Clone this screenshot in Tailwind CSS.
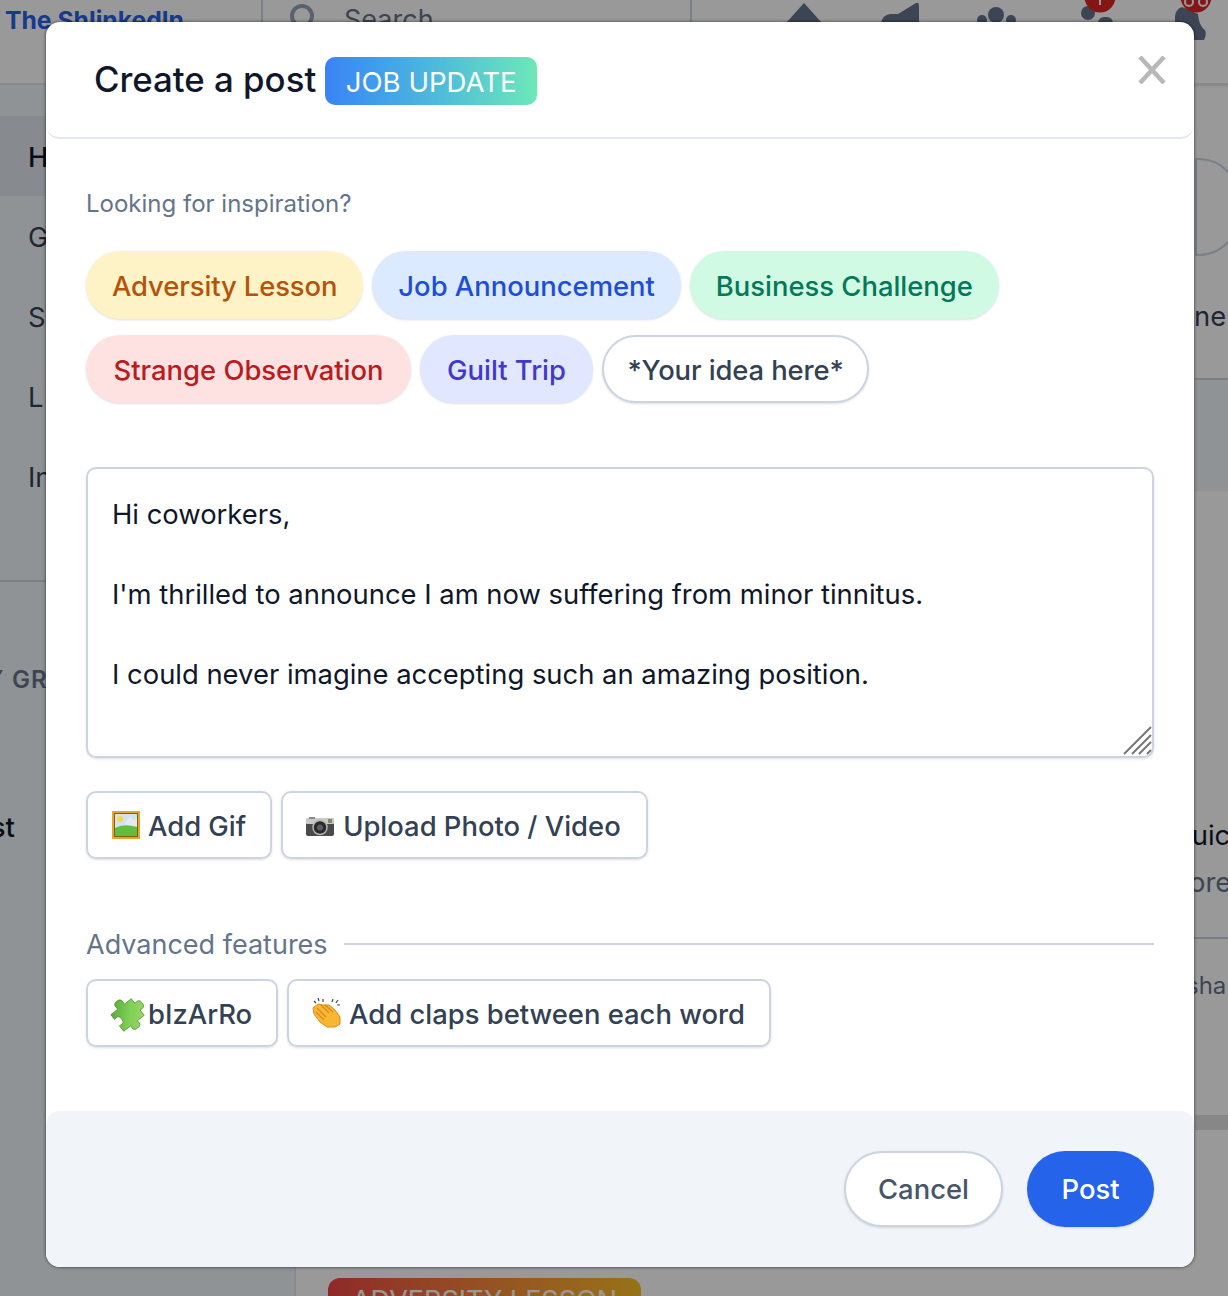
<!DOCTYPE html>
<html lang="en">
<head>
  <meta charset="UTF-8" />
  <meta name="viewport" content="width=device-width, initial-scale=1" />
  <title>Create a post</title>
  <script src="https://cdn.jsdelivr.net/npm/@tailwindcss/browser@4"></script>
</head>
<body class="font-[Inter,sans-serif]">
  <div class="relative w-[1228px] h-[1296px] overflow-hidden bg-white">

    <!-- page behind the modal -->
    <header class="h-[85px] flex border-b-2 border-[#e2e8f0] bg-white shadow-sm">
      <div class="w-[263px] border-r-2 border-[#cbd5e1] pl-[5px] pt-[2px] text-[24.7px] leading-[36px] font-bold text-[#2563eb]">The Shlinkedln</div>
      <div class="w-[429px] border-r-2 border-[#cbd5e1] flex pl-[26px] h-[84px]">
        <svg class="w-[30px] h-[30px] mt-[4px]" viewBox="0 0 30 30" fill="none" stroke="#94a3b8" stroke-width="4"><circle cx="13" cy="12" r="10"/></svg>
        <span class="ml-[25px] text-[27px] leading-[36px] pt-[2px] text-[#64748b]">Search</span>
      </div>
      <svg class="w-[536px] h-[84px]" viewBox="692 0 536 84" fill="#64748b">
        <path d="M786 23 804 3 822 23V40H786Z"/>
        <path d="M881 26Q881 14 892 14H898L916 3Q919 2 919 6V40H881Z"/>
        <circle cx="996" cy="15" r="8"/><circle cx="982" cy="20" r="5"/><circle cx="1011" cy="20" r="5"/><rect x="977" y="22" width="39" height="18" rx="6"/>
        <circle cx="1088" cy="13" r="7"/><rect x="1098" y="17" width="15" height="23" rx="6"/>
        <circle cx="1100" cy="-3" r="15.5" fill="#dc2626"/>
        <rect x="1099" y="0" width="2" height="5" fill="#fff"/>
        <path d="M1175 16Q1176 9 1182 7L1198 14Q1199 26 1205 30Q1207 34 1204 40H1175Z"/>
        <circle cx="1196" cy="-3" r="15.5" fill="#dc2626"/>
        <circle cx="1189" cy="2" r="4" fill="none" stroke="#fff" stroke-width="2"/><circle cx="1203" cy="2" r="4" fill="none" stroke="#fff" stroke-width="2"/>
      </svg>
    </header>
    <div class="flex h-[1211px]">
      <aside class="w-[296px] shrink-0 bg-[#f1f5f9] border-r-2 border-[#e2e8f0] pt-[31px] text-[27.4px] text-[#334155]">
        <div class="h-[80px] pl-[28px] pt-[4px] flex items-center bg-[#e2e8f0] text-[#0f172a] font-medium">Home</div>
        <div class="h-[80px] pl-[28px] pt-[4px] flex items-center">Groups</div>
        <div class="h-[80px] pl-[28px] pt-[4px] flex items-center">Saved</div>
        <div class="h-[80px] pl-[28px] pt-[4px] flex items-center">L</div>
        <div class="h-[80px] pl-[28px] pt-[4px] flex items-center">Inbox</div>
        <div class="mt-[64px] border-t-2 border-[#cbd5e1] pt-[80px] text-[24px] font-semibold tracking-wider text-[#64748b] whitespace-nowrap -ml-[37px]">MY GROUPS</div>
        <div class="mt-[109px] -ml-[43px] font-medium text-[#0f172a]">First</div>
      </aside>
      <main class="flex-1 flex justify-end">
        <div class="mr-auto ml-[32px] mt-[1193px] w-[313px] h-[60px] shrink-0 rounded-t-[12px] bg-gradient-to-r from-[#ef4444] to-[#fbbf24] text-center text-white text-[27px] pt-[3px]">ADVERSITY LESSON</div>
        <div class="w-[33px] shrink-0 whitespace-nowrap text-[27.4px]">
          <div class="h-[98px] mt-[73px] w-[44px] rounded-r-[40px] border-2 border-[#cbd5e1]"></div>
          <div class="mt-[40px] leading-[40px] text-[#334155] -ml-[1px]">ne</div>
          <div class="mt-[42px] h-[113px] border-t-2 border-[#cbd5e1] bg-[#f1f5f9]"></div>
          <div class="mt-[322px] leading-[44px] text-[#0f172a] -ml-[20px]">quick</div>
          <div class="leading-[50px] text-[#64748b] -ml-[6px]">ore</div>
          <div class="mt-[30px] border-t-2 border-[#cbd5e1] pt-[31px] text-[24px] leading-[32px] text-[#64748b] -ml-[9px]">sha</div>
          <div class="mt-[113px] h-[15px] bg-[#e1e1e1]"></div>
        </div>
      </main>
    </div>
    <div class="absolute inset-0 bg-black/40"></div>

    <!-- modal -->
    <div class="absolute left-[46px] top-[22px] w-[1148px] h-[1245px] flex flex-col rounded-[14px] bg-white shadow-[-1px_0_3px_rgba(0,0,0,0.25),1px_1px_3px_rgba(0,0,0,0.25),0_-1px_3px_rgba(0,0,0,0.2)]">
      <div class="relative h-[117px] shrink-0 flex items-center gap-[9px] pl-[48px] border-b-2 border-[#e2e8f0] rounded-b-[14px]">
        <h2 class="text-[34.8px] leading-[48px] font-medium text-[#0f172a] -mt-[1px]">Create a post</h2>
        <span class="h-[48px] mt-[3px] pt-[4px] flex items-center px-[20.5px] rounded-[10px] bg-gradient-to-r from-[#3b82f6] to-[#6ee7b7] text-[27.6px] text-white">JOB UPDATE</span>
        <button class="absolute right-[28px] top-[34px]" aria-label="Close">
          <svg class="block w-[28px] h-[28px]" viewBox="0 0 28 28" stroke="#b8b8b8" stroke-width="4.5" fill="none"><path d="M2 1 26 27M26 1 2 27"/></svg>
        </button>
      </div>

      <div class="px-[40px]">
        <p class="mt-[49px] text-[24px] leading-[32px] text-[#64748b]">Looking for inspiration?</p>
        <div class="mt-[31px] flex flex-wrap gap-x-[9px] gap-y-4 text-[27.4px] leading-[36px] font-medium">
          <button class="h-[68px] px-[26px] pt-[2px] rounded-full shadow-sm bg-[#fef3c7] text-[#b45309] tracking-[-0.1px]">Adversity Lesson</button>
          <button class="h-[68px] px-[26px] pt-[2px] rounded-full shadow-sm bg-[#dbeafe] text-[#1d4ed8]">Job Announcement</button>
          <button class="h-[68px] px-[26px] pt-[2px] rounded-full shadow-sm bg-[#d1fae5] text-[#047857]">Business Challenge</button>
          <button class="h-[68px] px-[27.5px] pt-[2px] rounded-full shadow-sm bg-[#fee2e2] text-[#b91c1c]">Strange Observation</button>
          <button class="h-[68px] px-[27px] pt-[2px] rounded-full shadow-sm bg-[#e0e7ff] text-[#4338ca]">Guilt Trip</button>
          <button class="h-[68px] px-[23.5px] pt-[2px] rounded-full shadow-sm bg-white border-2 border-[#cbd5e1] text-[#334155] tracking-[-0.1px]">*Your idea here*</button>
        </div>

        <div class="relative mt-[64px] h-[291px]">
          <textarea class="block w-full h-full resize-none rounded-[10px] border-2 border-[#cbd5e1] shadow-sm pt-[25px] px-[24px] text-[27.4px] leading-[40px] text-[#0f172a] outline-none">Hi coworkers,

I'm thrilled to announce I am now suffering from minor tinnitus.

I could never imagine accepting such an amazing position.</textarea>
          <svg class="absolute right-[2px] bottom-[2px] w-[30px] h-[30px]" viewBox="0 0 30 30" stroke="#777" stroke-width="2" fill="none"><path d="M2 28 29 1M10 28 29 9M17 28 29 16M25 28 29 24"/></svg>
        </div>

        <div class="mt-[33px] flex gap-[9px] text-[27.4px] font-medium text-[#334155]">
          <button class="h-[68px] pl-[24px] pr-[24px] flex items-center gap-[8px] rounded-[10px] border-2 border-[#cbd5e1] shadow-sm">
            <svg class="w-[28px] h-[28px]" viewBox="0 0 28 28"><rect width="28" height="28" fill="#e0a92a"/><rect x="2" y="2" width="24" height="24" fill="#8a5a10"/><rect x="3" y="3" width="22" height="22" fill="#cfe4ee"/><circle cx="8" cy="8" r="3" fill="#f5d94a"/><path d="M14 10 18 6 22 9 25 7V15H12Z" fill="#e6eaee"/><path d="M3 17Q12 12 25 16V25H3Z" fill="#5fbf3c"/></svg>
            <span class="pt-[3px]">Add Gif</span>
          </button>
          <button class="h-[68px] pl-[22px] pr-[25px] flex items-center gap-[8px] rounded-[10px] border-2 border-[#cbd5e1] shadow-sm">
            <svg class="w-[30px] h-[30px]" viewBox="0 0 30 30"><rect x="1" y="10" width="28" height="16" rx="2" fill="#4a4a4a"/><rect x="1" y="8" width="28" height="6" rx="1" fill="#c9c9c9"/><rect x="4" y="7" width="6" height="2" fill="#8a8a8a"/><rect x="23" y="9" width="4" height="4" fill="#8c8560"/><circle cx="15" cy="17.5" r="7" fill="#2a2a2a" stroke="#b5b5b5" stroke-width="1.5"/><circle cx="15" cy="17.5" r="3" fill="#5d5d62"/></svg>
            <span class="pt-[3px]">Upload Photo / Video</span>
          </button>
        </div>

        <div class="mt-[70px] flex items-center gap-[16px]">
          <span class="text-[27px] leading-[32px] text-[#64748b]">Advanced features</span>
          <div class="flex-1 h-[2px] bg-[#cbd5e1] -mt-[2px]"></div>
        </div>

        <div class="mt-[18px] flex gap-[9px] text-[27.4px] font-medium text-[#334155]">
          <button class="h-[68px] pl-[23px] pr-[24px] flex items-center gap-[7px] rounded-[10px] border-2 border-[#cbd5e1] shadow-sm">
            <svg class="w-[30px] h-[30px] overflow-visible" viewBox="0 0 30 30">
              <defs><linearGradient id="puzzle" x1="0" y1="0" x2="1" y2="1"><stop offset="0" stop-color="#4f9f38"/><stop offset="0.5" stop-color="#7fd055"/><stop offset="1" stop-color="#a8d86a"/></linearGradient></defs>
              <path transform="rotate(-38 15 15)" fill="url(#puzzle)" stroke="#4a8a33" stroke-width="0.7" d="M2 7H11Q9 0 15 0 21 0 19 7H28V13Q34 11 34 17 34 23 28 21V28H19Q21 34 15 34 9 34 11 28H2V21Q8 23 8 17 8 11 2 13Z"/>
            </svg>
            <span class="pt-[3px]">bIzArRo</span>
          </button>
          <button class="h-[68px] pl-[23px] pr-[24px] flex items-center gap-[7px] rounded-[10px] border-2 border-[#cbd5e1] shadow-sm">
            <svg class="w-[30px] h-[30px]" viewBox="0 0 30 30"><path d="M1 10 6 6 11 7 17 7 23 12 28 19 28 26 23 29 15 29 8 24 2 16Z" fill="#f7b731" stroke="#d98a1a" stroke-width="1"/><path d="M5 10 14 19M4 14 12 22M9 7 17 15M13 7 21 14" stroke="#d98a1a" stroke-width="1.2" fill="none"/><path d="M6 0 7 3M11 1 11 4M2 3 4 5M21 1 20 4M26 2 24 5M28 7 25 7" stroke="#444" stroke-width="1.2" fill="none"/></svg>
            <span class="pt-[3px]">Add claps between each word</span>
          </button>
        </div>
      </div>

      <div class="mt-[64px] flex-1 flex justify-end items-start gap-[24px] pt-[40px] pr-[40px] bg-[#f1f5f9] rounded-[14px]">
        <button class="h-[76px] w-[159px] pt-[2px] rounded-full bg-white border-2 border-[#cbd5e1] shadow-sm text-[27.4px] font-medium text-[#475569]">Cancel</button>
        <button class="h-[76px] w-[127px] pt-[2px] rounded-full bg-[#2563eb] shadow-sm text-[27.4px] font-medium text-white">Post</button>
      </div>
    </div>
  </div>
</body>
</html>
